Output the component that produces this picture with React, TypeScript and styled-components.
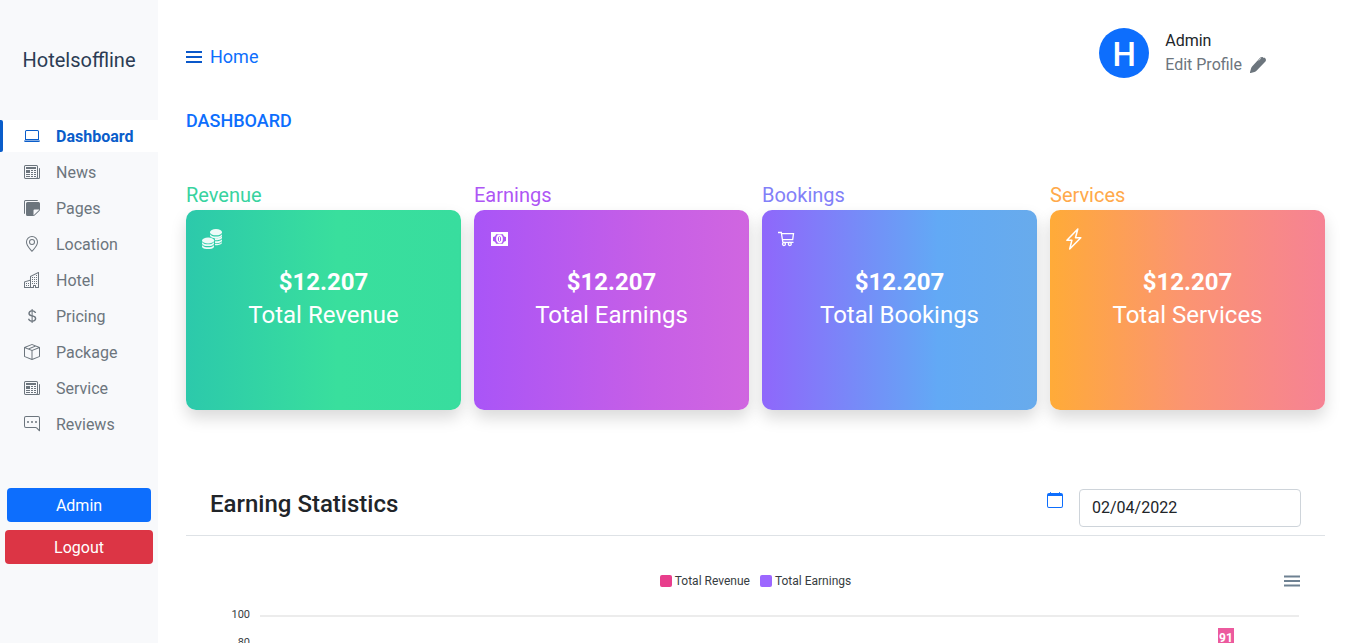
import React from "react";
import styled, { createGlobalStyle } from "styled-components";
import {
  BsLaptop,
  BsNewspaper,
  BsStickiesFill,
  BsGeoAlt,
  BsBuildings,
  BsCurrencyDollar,
  BsBoxSeam,
  BsChatRightDots,
  BsCalendar,
} from "react-icons/bs";

const GlobalStyle = createGlobalStyle`
  *, *::before, *::after { box-sizing: border-box; }
  body {
    margin: 0;
    background: #fff;
    color: #212529;
    font: 400 16px/24px Roboto, "Liberation Sans", sans-serif;
  }
  h1, h2, h3, p, ul { margin: 0; padding: 0; font-weight: 400; }
  a { text-decoration: none; color: inherit; }
  button, input { font: inherit; }
  svg { display: block; flex: none; }
`;

const Page = styled.div`
  display: flex;
  height: 100vh;
`;

const Sidebar = styled.aside`
  flex: 0 0 158px;
  background: #f8f9fb;
`;

const Brand = styled.h1`
  height: 120px;
  display: flex;
  align-items: center;
  justify-content: center;
  font-size: 20px;
  color: #2b3c54;
`;

const NavList = styled.ul`
  list-style: none;
  display: flex;
  flex-direction: column;
  gap: 4px;
`;

const NavLink = styled.a<{ $active?: boolean }>`
  display: flex;
  align-items: center;
  gap: 16px;
  height: 32px;
  color: ${(p) => (p.$active ? "#0a5dca" : "#6c757d")};
  background: ${(p) => (p.$active ? "#fff" : "none")};
  font-weight: ${(p) => (p.$active ? 700 : 400)};
  &::before {
    content: "";
    width: 3px;
    height: 100%;
    margin-right: 5px;
    border-radius: 0 2px 2px 0;
    background: ${(p) => (p.$active ? "#0a5dca" : "none")};
  }
`;

const NavText = styled.span`
  padding-top: 2px;
`;

const SideActions = styled.div`
  display: flex;
  flex-direction: column;
  gap: 8px;
  padding: 48px 5px 0;
`;

const SideButton = styled.button<{ $tone: string; $inset?: number }>`
  height: 34px;
  margin: 0 ${(p) => p.$inset || 0}px;
  padding: 2px 0 0;
  border: 0;
  border-radius: 4px;
  background: ${(p) => p.$tone};
  color: #fff;
`;

const Main = styled.main`
  flex: 1;
  min-width: 0;
  padding: 28px 24px 0 28px;
  overflow: auto;
  scrollbar-width: none;
`;

const TopBar = styled.header`
  display: flex;
  align-items: flex-start;
  justify-content: space-between;
  padding-right: 59px;
`;

const HomeLink = styled.a`
  display: flex;
  align-items: center;
  gap: 8px;
  height: 58px;
  font-size: 18px;
  color: #0d6efd;
`;

const Profile = styled.div`
  display: flex;
  gap: 16px;
`;

const ProfileText = styled.div`
  padding-top: 1px;
`;

const Avatar = styled.div`
  display: flex;
  align-items: center;
  justify-content: center;
  width: 50px;
  height: 50px;
  padding-top: 4px;
  border-radius: 50%;
  background: #0d6efd;
  color: #fff;
  font-size: 33px;
  font-weight: 500;
`;

const EditLink = styled.a`
  display: flex;
  align-items: center;
  gap: 8px;
  color: #6c757d;
`;

const PageTitle = styled.h2`
  padding-top: 23px;
  font-size: 18px;
  font-weight: 500;
  color: #0d6efd;
`;

const Cards = styled.section`
  display: grid;
  grid-template-columns: repeat(4, 1fr);
  gap: 13px;
  padding-top: 49px;
`;

const CardLabel = styled.h3<{ $color: string }>`
  height: 28px;
  line-height: 26px;
  font-size: 20px;
  color: ${(p) => p.$color};
`;

const Card = styled.div<{ $fill: string }>`
  height: 200px;
  padding: 16px;
  border-radius: 10px;
  background: linear-gradient(to right, ${(p) => p.$fill});
  box-shadow: 0 8px 16px rgba(0, 0, 0, 0.15);
  color: #fff;
`;

const CardIcon = styled.div`
  display: flex;
  align-items: center;
  height: 26px;
`;

const CardText = styled.p<{ $bold?: boolean }>`
  font-size: 24px;
  line-height: 33px;
  font-weight: ${(p) => (p.$bold ? 700 : 400)};
  text-align: center;
  &:first-of-type { padding-top: 14px; }
`;

const StatsHead = styled.div`
  display: flex;
  justify-content: space-between;
  height: 56px;
  margin-top: 70px;
  padding: 9px 24px 0;
  border-bottom: 1px solid #dee2e6;
`;

const StatsTitle = styled.h2`
  font-size: 24px;
  font-weight: 500;
  line-height: 31px;
`;

const DateField = styled.label`
  display: flex;
  align-items: flex-start;
  gap: 16px;
  color: #0d6efd;
  svg { margin-top: 3px; }
`;

const DateInput = styled.input`
  width: 222px;
  height: 38px;
  padding: 0 12px 2px;
  border: 1px solid #ced4da;
  border-radius: 4px;
  background: #fff;
  color: #212529;
`;

const Legend = styled.div`
  display: grid;
  grid-template-columns: 1fr auto 1fr;
  align-items: center;
  margin-top: 33px;
  padding: 0 24px 0 0;
  height: 18px;
  font-size: 12px;
  color: #373d3f;
`;

const LegendItems = styled.div`
  display: flex;
  grid-column: 2;
  gap: 10px;
  padding-left: 24px;
`;

const LegendItem = styled.span<{ $color: string }>`
  display: flex;
  align-items: center;
  gap: 3px;
  &::before {
    content: "";
    width: 12px;
    height: 12px;
    border-radius: 2px;
    background: ${(p) => p.$color};
  }
`;

const ChartMenu = styled.button`
  justify-self: end;
  padding: 0;
  border: 0;
  background: none;
`;

const Plot = styled.div`
  position: relative;
  margin: 15px 26px 0 74px;
`;

const GridRow = styled.div`
  display: flex;
  align-items: center;
  height: 28px;
  margin-left: -34px;
  font-size: 11px;
  color: #373d3f;
  span { width: 24px; margin-right: 10px; padding-bottom: 2px; text-align: right; }
  &::after { content: ""; flex: 1; height: 2px; background: #ececec; }
`;

const ValueTag = styled.div`
  position: absolute;
  top: 26px;
  right: 65px;
  width: 16px;
  height: 20px;
  background: #ec5a9e;
  color: #fff;
  font-size: 12px;
  font-weight: 700;
  line-height: 20px;
  text-align: center;
`;

const stackPath = (x: number, y: number, n: number) =>
  Array.from({ length: n }, (_, i) => {
    const t = y + i * 3;
    return `M${x} ${t}v1.4c0 1.5 2.6 2.7 6 2.7s6-1.2 6-2.7V${t}c-1 1.6-3 2.3-6 2.3S${x + 1} ${t + 1.6} ${x} ${t}Z`;
  }).join("");

const CoinsIcon = () => (
  <svg width="20" height="20" viewBox="0 0 20 20" fill="#fff" fillOpacity="0.92" aria-hidden="true">
    <ellipse cx="14" cy="3.2" rx="6" ry="3.1" />
    <path d={stackPath(8, 5.2, 1)} />
    <path d="M12.8 9.2c3 .2 5.9-.3 7.2-2v1.4c0 1.8-3 2.9-6.9 2.7ZM13 12.2c3 .2 5.7-.3 7-2v1.4c0 1.8-3 2.9-6.9 2.7ZM13 15c3 .2 5.7-.3 7-2v.6c0 1.8-3 2.9-6.9 2.7Z" />
    <ellipse cx="6.1" cy="11.5" rx="6.1" ry="3" />
    <path d={stackPath(0, 13, 2)} />
  </svg>
);

const CashIcon = () => (
  <svg width="19" height="16" viewBox="0 0 19 16" aria-hidden="true">
    <path
      fill="#fff"
      fillRule="evenodd"
      d="M1 1h17v14H1ZM6 3.2C5.8 4.8 4.6 5.7 3 6v4c1.6.3 2.8 1.2 3 2.8h7c.2-1.6 1.4-2.5 3-2.8V6c-1.6-.3-2.8-1.2-3-2.8Z"
    />
    <ellipse cx="9.5" cy="8" rx="2.500" ry="3.700" fill="none" stroke="#fff" strokeWidth="1.700" />
    <path fill="#fff" d="M9 6h1v4H9Z" />
  </svg>
);

const CartIcon = () => (
  <svg width="17" height="16" viewBox="0 0 17 16" fill="none" stroke="#fff" strokeWidth="1.3" aria-hidden="true">
    <path d="M0 1.5h3.3l1.5 9.5M3.7 2.7h11.8l-.8 6H4.4M4.800 11.300h10.700" />
    <circle cx="6" cy="13" r="1.5" />
    <circle cx="11.8" cy="13" r="1.5" />
  </svg>
);

const BoltIcon = () => (
  <svg
    width="16"
    height="22"
    viewBox="0 0 16 22"
    fill="none"
    stroke="#fff"
    strokeWidth="1.5"
    strokeLinejoin="round"
    aria-hidden="true"
  >
    <path d="M11.800 1 .9 12.200h5L3.700 21 14.800 9.800H9.500Z" />
  </svg>
);

const PenIcon = () => (
  <svg width="16" height="16" viewBox="0 0 16 16" fill="currentColor" aria-hidden="true">
    <path d="M9.900.9c.9-.9 2.300-1.100 3.300-.3l.4.3c.6-.3 1.200-.2 1.600.3 1 1 1 2.600 0 3.600L6.500 13.700c-.6.600-1.200 1-2 1.200L.7 16c-.5.100-.8-.200-.7-.7l1.100-4c.200-.8.600-1.400 1.200-2L9.900.9Z" />
    <path d="M8.600 3.500 11.200 1" stroke="#fff" strokeWidth=".6" />
  </svg>
);

const NAV = [
  { label: "Dashboard", Icon: BsLaptop, active: true },
  { label: "News", Icon: BsNewspaper },
  { label: "Pages", Icon: BsStickiesFill },
  { label: "Location", Icon: BsGeoAlt },
  { label: "Hotel", Icon: BsBuildings },
  { label: "Pricing", Icon: BsCurrencyDollar },
  { label: "Package", Icon: BsBoxSeam },
  { label: "Service", Icon: BsNewspaper },
  { label: "Reviews", Icon: BsChatRightDots },
];

const CARDS = [
  { name: "Revenue", color: "#38d39f", fill: "#2cc9ab, #39df9d 55%, #38dd9e", icon: <CoinsIcon /> },
  { name: "Earnings", color: "#ae56f5", fill: "#a955f7, #c75fe6 65%, #d066e0", icon: <CashIcon /> },
  { name: "Bookings", color: "#8280f8", fill: "#8f67fb, #62a9f5 64%, #68abec", icon: <CartIcon /> },
  { name: "Services", color: "#ffa94a", fill: "#ffab38, #fb9472 50%, #f68294", icon: <BoltIcon /> },
];

export default function App() {
  return (
    <>
      <GlobalStyle />
      <Page>
        <Sidebar>
          <Brand>Hotelsoffline</Brand>
          <nav>
            <NavList>
              {NAV.map(({ label, Icon, active }) => (
                <li key={label}>
                  <NavLink href="#" $active={active}>
                    <Icon size={16} />
                    <NavText>{label}</NavText>
                  </NavLink>
                </li>
              ))}
            </NavList>
          </nav>
          <SideActions>
            <SideButton $tone="#0d6efd" $inset={2}>Admin</SideButton>
            <SideButton $tone="#dc3545">Logout</SideButton>
          </SideActions>
        </Sidebar>
        <Main>
          <TopBar>
            <HomeLink href="#">
              <svg width="16" height="12" viewBox="0 0 16 12" fill="#0a58ca" aria-hidden="true">
                <path d="M0 0h16v2H0zM0 5h16v2H0zM0 10h16v2H0z" />
              </svg>
              Home
            </HomeLink>
            <Profile>
              <Avatar>H</Avatar>
              <ProfileText>
                <p>Admin</p>
                <EditLink href="#">
                  Edit Profile
                  <PenIcon />
                </EditLink>
              </ProfileText>
            </Profile>
          </TopBar>
          <PageTitle>DASHBOARD</PageTitle>
          <Cards>
            {CARDS.map((c) => (
              <article key={c.name}>
                <CardLabel $color={c.color}>{c.name}</CardLabel>
                <Card $fill={c.fill}>
                  <CardIcon>{c.icon}</CardIcon>
                  <CardText $bold>$12.207</CardText>
                  <CardText>Total {c.name}</CardText>
                </Card>
              </article>
            ))}
          </Cards>
          <section>
            <StatsHead>
              <StatsTitle>Earning Statistics</StatsTitle>
              <DateField>
                <BsCalendar size={16} />
                <DateInput type="text" aria-label="Date" defaultValue="02/04/2022" />
              </DateField>
            </StatsHead>
            <Legend>
              <LegendItems>
                <LegendItem $color="#e83e8c">Total Revenue</LegendItem>
                <LegendItem $color="#9c67ff">Total Earnings</LegendItem>
              </LegendItems>
              <ChartMenu aria-label="Chart menu">
                <svg width="18" height="12" viewBox="0 0 18 12" fill="#6e8192" aria-hidden="true">
                  <path d="M1 .5h16v2H1zM1 5h16v2H1zM1 9.5h16v2H1z" />
                </svg>
              </ChartMenu>
            </Legend>
            <Plot>
              <GridRow><span>100</span></GridRow>
              <GridRow><span>80</span></GridRow>
              <ValueTag>91</ValueTag>
            </Plot>
          </section>
        </Main>
      </Page>
    </>
  );
}
